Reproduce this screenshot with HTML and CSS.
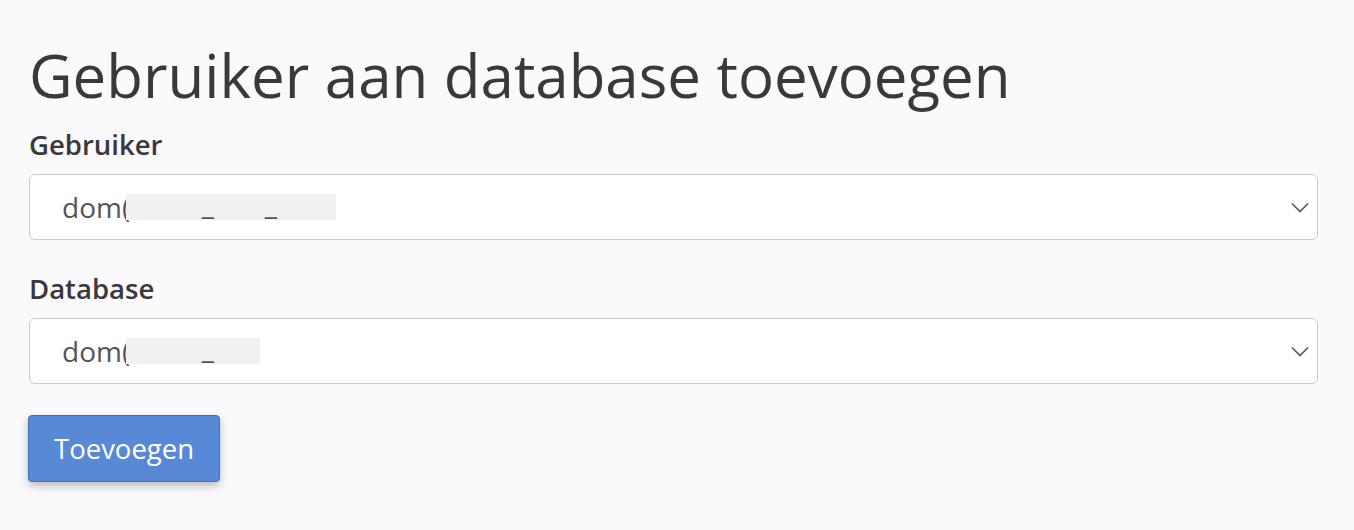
FILE: index.html
```html
<!DOCTYPE html>
<html lang="nl">
<head>
    <meta charset="UTF-8">
    <meta name="viewport" content="width=device-width, initial-scale=1.0">
    <title>Gebruiker aan database toevoegen</title>
    <link rel="stylesheet" href="styles.css">
</head>
<body>
    <div class="container">
        <h1>Gebruiker aan database toevoegen</h1>

        <div class="form-group">
            <label class="field-label" for="user">Gebruiker</label>
            <div class="select-box" id="user">
                <span class="select-value">dom(<span class="redacted"><span class="us us-1">_</span><span class="us us-2">_</span></span></span>
                <svg class="chevron" width="18" height="11" viewBox="0 0 18 11"><path d="M1 1.5 L9 9.5 L17 1.5" fill="none" stroke="#5a595e" stroke-width="1.6"/></svg>
            </div>
        </div>

        <div class="form-group">
            <label class="field-label" for="db">Database</label>
            <div class="select-box" id="db">
                <span class="select-value">dom(<span class="redacted short"><span class="us us-1">_</span></span></span>
                <svg class="chevron" width="18" height="11" viewBox="0 0 18 11"><path d="M1 1.5 L9 9.5 L17 1.5" fill="none" stroke="#5a595e" stroke-width="1.6"/></svg>
            </div>
        </div>

        <div class="actions">
            <button class="btn-primary">Toevoegen</button>
        </div>
    </div>
</body>
</html>
```

FILE: styles.css
```css
body {
    font-family: "Open Sans", Arial, sans-serif;
    margin: 0;
    background-color: #faf9fc;
    color: #3a383d;
}
.container {
    padding: 45px 36px 40px 28px;
}
h1 {
    font-size: 60px;
    font-weight: 400;
    line-height: 1;
    margin: 0 0 24px 1px;
}
.form-group {
    display: flex;
    flex-direction: column;
    margin-bottom: 33px;
}
.field-label {
    font-size: 27.5px;
    font-weight: 600;
    line-height: 34px;
    margin: -1px 0 12px 1px;
}
.select-box {
    display: flex;
    align-items: center;
    justify-content: space-between;
    height: 64px;
    margin-left: 1px;
    background-color: #fff;
    border: 1px solid #c9c8cc;
    border-radius: 6px;
    padding: 0 8px 0 32px;
}
.select-value {
    font-size: 28px;
    color: #555459;
    display: flex;
    align-items: center;
}
.redacted {
    position: relative;
    display: inline-block;
    width: 210px;
    height: 26px;
    margin-left: -4.5px;
    background-color: #f1f0f3;
}
.redacted.short {
    width: 134px;
}
.us {
    position: absolute;
    top: -3px;
    line-height: 26px;
    color: #555459;
}
.us-1 { left: 76px; }
.us-2 { left: 139px; }
.actions {
    margin-top: -2px;
}
.btn-primary {
    font-family: "Open Sans", Arial, sans-serif;
    font-size: 27.5px;
    color: #fff;
    background-color: #5889d6;
    border: 1px solid #3f6fbd;
    border-radius: 4px;
    padding: 0 25px;
    height: 67px;
    box-shadow: 0 4px 9px rgba(0,0,0,0.25);
}
```
